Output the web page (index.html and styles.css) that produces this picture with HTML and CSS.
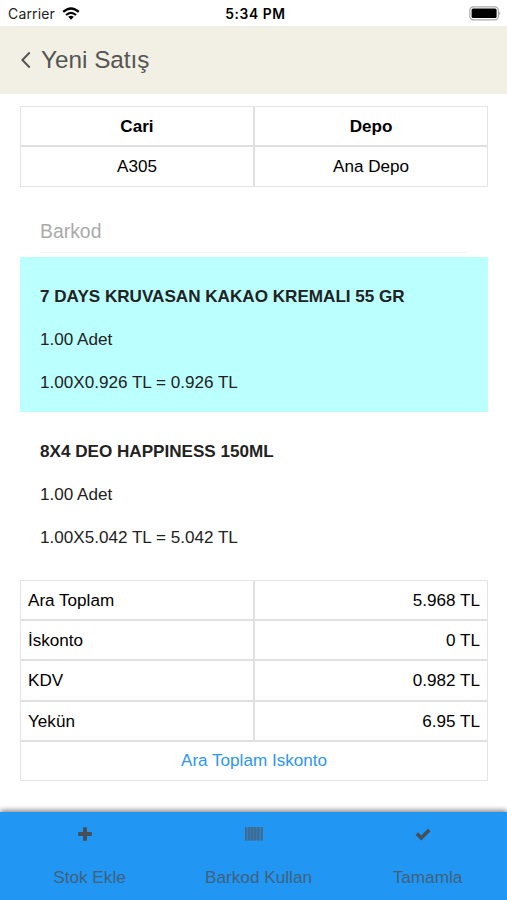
FILE: index.html
```html
<!DOCTYPE html>
<html lang="tr">
<head>
    <meta charset="UTF-8">
    <meta name="viewport" content="width=device-width, initial-scale=1.0">
    <title>Yeni Satış</title>
    <link rel="stylesheet" href="styles.css">
</head>
<body>

    <!-- Status Bar -->
    <div class="status-bar">
        <div class="carrier">
            <span>Carrier</span>
            <svg class="wifi" width="18" height="13" viewBox="0 0 18 13">
                <path d="M1.2 4.9 Q9 -2 16.8 4.9" fill="none" stroke="#000" stroke-width="2.3"/>
                <path d="M4 8 Q9 3.6 14 8" fill="none" stroke="#000" stroke-width="2.2"/>
                <path d="M6.2 9.8 Q9 7.6 11.8 9.8 L9 12.7 Z" fill="#000"/>
            </svg>
        </div>
        <div class="time">5:34 PM</div>
        <div class="battery">
            <svg width="32" height="15" viewBox="0 0 32 15">
                <rect x="0.8" y="0.8" width="28.6" height="13" rx="3.6" fill="#fff" stroke="#aaa" stroke-width="1.2"/>
                <rect x="2.6" y="2.6" width="25" height="9.4" rx="1.5" fill="#000"/>
                <path d="M30.3 5.4 Q32.1 7.3 30.3 9.2 Z" fill="#999"/>
            </svg>
        </div>
    </div>

    <header class="header">
        <svg class="back" width="12" height="18" viewBox="0 0 12 18">
            <path d="M9.7 1.5 L2.4 9 L9.7 16.5" fill="none" stroke="#555" stroke-width="2"/>
        </svg>
        <h1>Yeni Satış</h1>
    </header>

    <main class="content">
        <table class="info-table">
            <tr>
                <th>Cari</th>
                <th>Depo</th>
            </tr>
            <tr>
                <td>A305</td>
                <td>Ana Depo</td>
            </tr>
        </table>

        <input type="text" class="barcode" placeholder="Barkod">

        <!-- Products -->
        <div class="product selected">
            <h2>7 DAYS KRUVASAN KAKAO KREMALI 55 GR</h2>
            <p>1.00 Adet</p>
            <p>1.00X0.926 TL = 0.926 TL</p>
        </div>
        <div class="product">
            <h2>8X4 DEO HAPPINESS 150ML</h2>
            <p>1.00 Adet</p>
            <p>1.00X5.042 TL = 5.042 TL</p>
        </div>

        <!-- Totals -->
        <table class="totals-table">
            <tr>
                <td>Ara Toplam</td>
                <td class="amount">5.968 TL</td>
            </tr>
            <tr>
                <td>İskonto</td>
                <td class="amount">0 TL</td>
            </tr>
            <tr class="tax">
                <td>KDV</td>
                <td class="amount">0.982 TL</td>
            </tr>
            <tr>
                <td>Yekün</td>
                <td class="amount">6.95 TL</td>
            </tr>
            <tr>
                <td colspan="2" class="discount"><a href="#">Ara Toplam Iskonto</a></td>
            </tr>
        </table>
    </main>

    <footer class="footer">
        <button class="add">
            <svg width="14" height="14" viewBox="0 0 14 14">
                <path d="M5 0.2 H9 V5 H13.8 V9 H9 V13.8 H5 V9 H0.2 V5 H5 Z" fill="#444f57"/>
            </svg>
            <span>Stok Ekle</span>
        </button>
        <button class="scan">
            <svg width="18" height="14" viewBox="0 0 18 14">
                <rect width="18" height="13.5" fill="#3878ad"/>
                <path d="M0.7 0 V13.5 M4 0 V13.5 M7 0 V13.5 M10 0 V13.5 M13.3 0 V13.5 M17 0 V13.5" stroke="#3f6789" stroke-width="1.2"/>
                <path d="M2.3 0 V13.5 M15.2 0 V13.5" stroke="#2f86cf" stroke-width="0.7"/>
            </svg>
            <span>Barkod Kullan</span>
        </button>
        <button class="done">
            <svg width="16" height="14" viewBox="0 0 16 14">
                <path d="M1.8 6.6 L6.3 11 L14.2 3.1" fill="none" stroke="#444f57" stroke-width="3.6"/>
            </svg>
            <span>Tamamla</span>
        </button>
    </footer>

</body>
</html>
```
FILE: styles.css
```css
* {
    box-sizing: border-box;
}

body {
    margin: 0;
    height: 900px;
    display: flex;
    flex-direction: column;
    overflow: hidden;
    background-color: #fff;
    color: #000;
    font-family: "Liberation Sans", Arial, sans-serif;
    font-size: 17.1px;
}

.status-bar {
    height: 26px;
    padding: 0 6px 0 8px;
    display: grid;
    grid-template-columns: 1fr auto 1fr;
    align-items: center;
    font-family: Inter, sans-serif;
    font-size: 14px;
}

.carrier {
    display: flex;
    align-items: center;
    gap: 7px;
    padding-top: 1px;
    color: #222;
    letter-spacing: 0.15px;
}

.time {
    padding: 1px 0 0 2px;
    font-size: 13.8px;
    font-weight: 600;
    letter-spacing: 0.6px;
}

.battery {
    display: flex;
    justify-content: flex-end;
}

.header {
    height: 68px;
    padding: 0 20px;
    display: flex;
    align-items: center;
    gap: 9px;
    background-color: #f2efe4;
    color: #555;
}

.header h1 {
    margin: 0;
    font-size: 24.3px;
    font-weight: normal;
}

.content {
    flex: 1;
    padding: 12px 19px 0 20px;
}

table {
    width: 100%;
    table-layout: fixed;
    border-spacing: 0;
    border: 1px solid #e4e4e4;
}

th, td {
    height: 40px;
    padding: 1px 7px 0;
    border: 1px solid #e0e0e0;
    border-width: 0 2px 2px 0;
}

th:first-child, td:first-child {
    width: 234px;
}

th:last-child, td:last-child {
    border-right: none;
}

tr:last-child td {
    height: 39px;
    padding-top: 0;
    border-bottom: none;
}

.info-table {
    text-align: center;
}

.barcode {
    display: block;
    width: 427px;
    height: 46px;
    margin: 20px 20px 4px;
    padding: 4px 0 0;
    border: none;
    border-bottom: 1px solid #f4f4f4;
    outline: none;
    background: none;
    font: 19.4px "Liberation Sans", Arial, sans-serif;
}

.barcode::placeholder {
    color: #aaa;
    opacity: 1;
}

.product {
    height: 155px;
    padding: 30px 20px 0;
    color: #222;
}

.product.selected {
    background-color: #bbffff;
}

.product h2, .product p {
    margin: 0 0 23px;
    font-size: 17.1px;
    line-height: 20px;
}

.totals-table {
    margin-top: 13px;
}

.totals-table .tax td {
    height: 41px;
}

.totals-table .amount {
    text-align: right;
}

.totals-table .discount {
    height: 38px;
    text-align: center;
}

.discount a {
    color: #2e96ed;
    text-decoration: none;
}

.footer {
    height: 88px;
    display: grid;
    grid-template-columns: repeat(3, 1fr);
    background-color: #2196f3;
    box-shadow: 0 -2px 5px rgba(0, 0, 0, 0.45);
}

.footer button {
    padding: 15px 0 0;
    display: flex;
    flex-direction: column;
    align-items: center;
    gap: 26px;
    border: none;
    background: none;
    color: #40627d;
    font: 17.2px/20px "Liberation Sans", Arial, sans-serif;
}

.footer span {
    padding-left: 10px;
}
```
